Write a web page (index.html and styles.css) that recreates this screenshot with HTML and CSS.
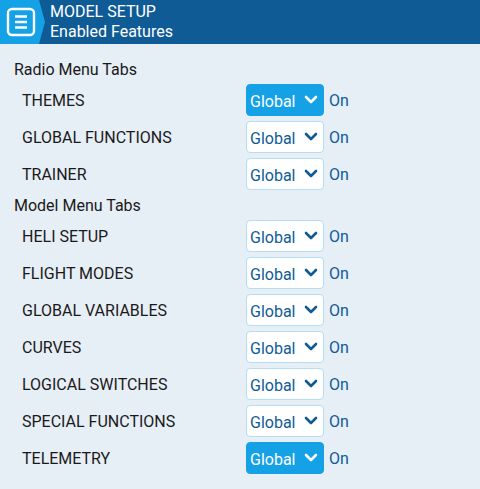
FILE: index.html
```html
<!DOCTYPE html>
<html>
<head>
<meta charset="utf-8">
<link rel="stylesheet" href="styles.css">
</head>
<body>
<header class="hdr">
  <div class="hdr-icon">
    <svg width="30" height="30" viewBox="0 0 30 30">
      <rect x="2" y="2" width="26" height="26" rx="4" fill="none" stroke="#fff" stroke-width="2.4"/>
      <line x1="9" y1="9.5" x2="21" y2="9.5" stroke="#fff" stroke-width="2.4"/>
      <line x1="9" y1="15" x2="21" y2="15" stroke="#fff" stroke-width="2.4"/>
      <line x1="9" y1="20.5" x2="21" y2="20.5" stroke="#fff" stroke-width="2.4"/>
    </svg>
  </div>
  <div class="hdr-text">
    <div>MODEL SETUP</div>
    <div>Enabled Features</div>
  </div>
</header>
<main class="list">
  <div class="title">Radio Menu Tabs</div>
  <div class="row"><span class="label">THEMES</span><span class="sel focus">Global<svg class="chev" viewBox="0 0 14 10"><polyline points="2,2 7,7 12,2"/></svg></span><span class="val">On</span></div>
  <div class="row"><span class="label">GLOBAL FUNCTIONS</span><span class="sel">Global<svg class="chev" viewBox="0 0 14 10"><polyline points="2,2 7,7 12,2"/></svg></span><span class="val">On</span></div>
  <div class="row"><span class="label">TRAINER</span><span class="sel">Global<svg class="chev" viewBox="0 0 14 10"><polyline points="2,2 7,7 12,2"/></svg></span><span class="val">On</span></div>
  <div class="title">Model Menu Tabs</div>
  <div class="row"><span class="label">HELI SETUP</span><span class="sel">Global<svg class="chev" viewBox="0 0 14 10"><polyline points="2,2 7,7 12,2"/></svg></span><span class="val">On</span></div>
  <div class="row"><span class="label">FLIGHT MODES</span><span class="sel">Global<svg class="chev" viewBox="0 0 14 10"><polyline points="2,2 7,7 12,2"/></svg></span><span class="val">On</span></div>
  <div class="row"><span class="label">GLOBAL VARIABLES</span><span class="sel">Global<svg class="chev" viewBox="0 0 14 10"><polyline points="2,2 7,7 12,2"/></svg></span><span class="val">On</span></div>
  <div class="row"><span class="label">CURVES</span><span class="sel">Global<svg class="chev" viewBox="0 0 14 10"><polyline points="2,2 7,7 12,2"/></svg></span><span class="val">On</span></div>
  <div class="row"><span class="label">LOGICAL SWITCHES</span><span class="sel">Global<svg class="chev" viewBox="0 0 14 10"><polyline points="2,2 7,7 12,2"/></svg></span><span class="val">On</span></div>
  <div class="row"><span class="label">SPECIAL FUNCTIONS</span><span class="sel">Global<svg class="chev" viewBox="0 0 14 10"><polyline points="2,2 7,7 12,2"/></svg></span><span class="val">On</span></div>
  <div class="row"><span class="label">TELEMETRY</span><span class="sel focus">Global<svg class="chev" viewBox="0 0 14 10"><polyline points="2,2 7,7 12,2"/></svg></span><span class="val">On</span></div>
</main>
</body>
</html>
```
FILE: styles.css
```css
html, body {
  margin: 0;
  padding: 0;
}
body {
  width: 480px;
  height: 489px;
  background: #e6eef6;
  font-family: Roboto, "Noto Sans", sans-serif;
  font-size: 16px;
  color: #1a1a1a;
  overflow: hidden;
}
.hdr {
  height: 44px;
  display: flex;
  align-items: center;
  background: #0f5b96;
}
.hdr-icon {
  width: 45px;
  height: 44px;
  background: #15a1e6;
  clip-path: polygon(0 0, 39px 0, 45px 22px, 39px 44px, 0 44px);
  display: flex;
  align-items: center;
  padding-left: 6px;
  box-sizing: border-box;
}
.hdr-icon svg { display: block; }
.hdr-text {
  margin-left: 5px;
  color: #fff;
  line-height: 20px;
  font-size: 16px;
}
.list {
  padding: 15px 0 0 0;
  display: flex;
  flex-direction: column;
}
.title {
  height: 20px;
  line-height: 22px;
  padding-left: 14px;
  margin-bottom: 5px;
}
.row {
  height: 32px;
  display: flex;
  align-items: center;
  margin-bottom: 5px;
}
.label {
  width: 224px;
  padding-left: 22px;
}
.sel {
  box-sizing: border-box;
  width: 78px;
  height: 32px;
  border: 1px solid #b4dcf3;
  border-radius: 4px;
  background: #fff;
  color: #0f5b96;
  display: flex;
  align-items: center;
  padding-left: 3px;
  padding-top: 2px;
  position: relative;
}
.sel.focus {
  background: #15a1e6;
  border-color: #15a1e6;
  color: #fff;
}
.chev {
  position: absolute;
  right: 5px;
  top: 10px;
  width: 14px;
  height: 10px;
  fill: none;
  stroke: currentColor;
  stroke-width: 2.6;
  stroke-linecap: round;
  stroke-linejoin: round;
}
.val {
  margin-left: 5px;
  color: #0f5b96;
}
```
